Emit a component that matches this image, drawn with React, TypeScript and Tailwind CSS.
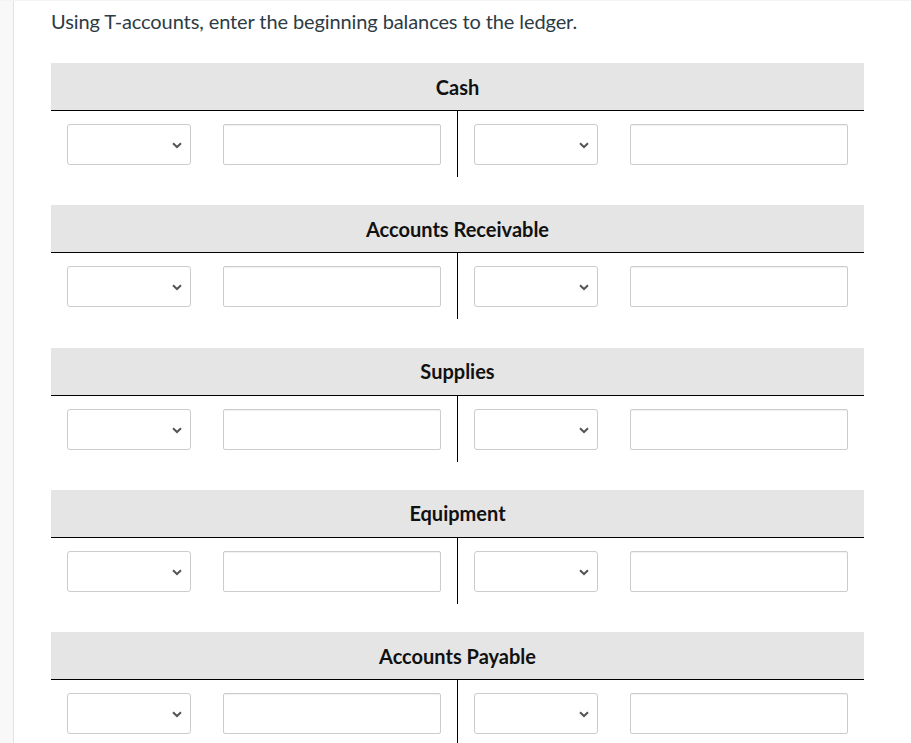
import React from "react";

const accounts = ["Cash", "Accounts Receivable", "Supplies", "Equipment", "Accounts Payable"];

function Chevron() {
  return (
    <svg width="10" height="7" viewBox="0 0 10 7" className="absolute right-[8px] top-[17px]">
      <path d="M1 1.2 L5 5 L9 1.2" fill="none" stroke="#555" strokeWidth="2" />
    </svg>
  );
}

function Side({ border }: { border?: boolean }) {
  return (
    <div className={`w-[406px] flex items-start pt-[13px] pl-[16px] gap-[32px] ${border ? "border-l border-black" : ""}`}>
      <div className="relative w-[124px] h-[41px] border border-[#cccccc] rounded-[3px] bg-white">
        <Chevron />
      </div>
      <div className="w-[218px] h-[41px] border border-[#cccccc] rounded-[2px] bg-white shadow-[inset_0_1px_1px_rgba(0,0,0,0.06)]" />
    </div>
  );
}

function TAccount({ name }: { name: string }) {
  return (
    <div className="w-[813px] mb-[28.25px]">
      <div className="h-[48px] bg-[#e5e5e5] border-b border-black flex items-center justify-center text-[20px] leading-[24px] font-bold text-[#111]">
        {name}
      </div>
      <div className="flex h-[66px]">
        <Side />
        <Side border />
      </div>
    </div>
  );
}

export default function App() {
  return (
    <div className="w-[911px] h-[743px] overflow-hidden flex bg-white font-['Lato',sans-serif] border-t border-[#f4f4f4]">
      <div className="w-[14px] shrink-0 bg-[#f8f8f8] border-r border-[#e3e3e3]" />
      <div className="pl-[37px] pt-[5px]">
        <p className="text-[20px] leading-[30px] text-[#2d3b45] tracking-[-0.1px]">
          Using T-accounts, enter the beginning balances to the ledger.
        </p>
        <div className="mt-[27px]">
          {accounts.map((a) => (
            <TAccount key={a} name={a} />
          ))}
        </div>
      </div>
    </div>
  );
}
